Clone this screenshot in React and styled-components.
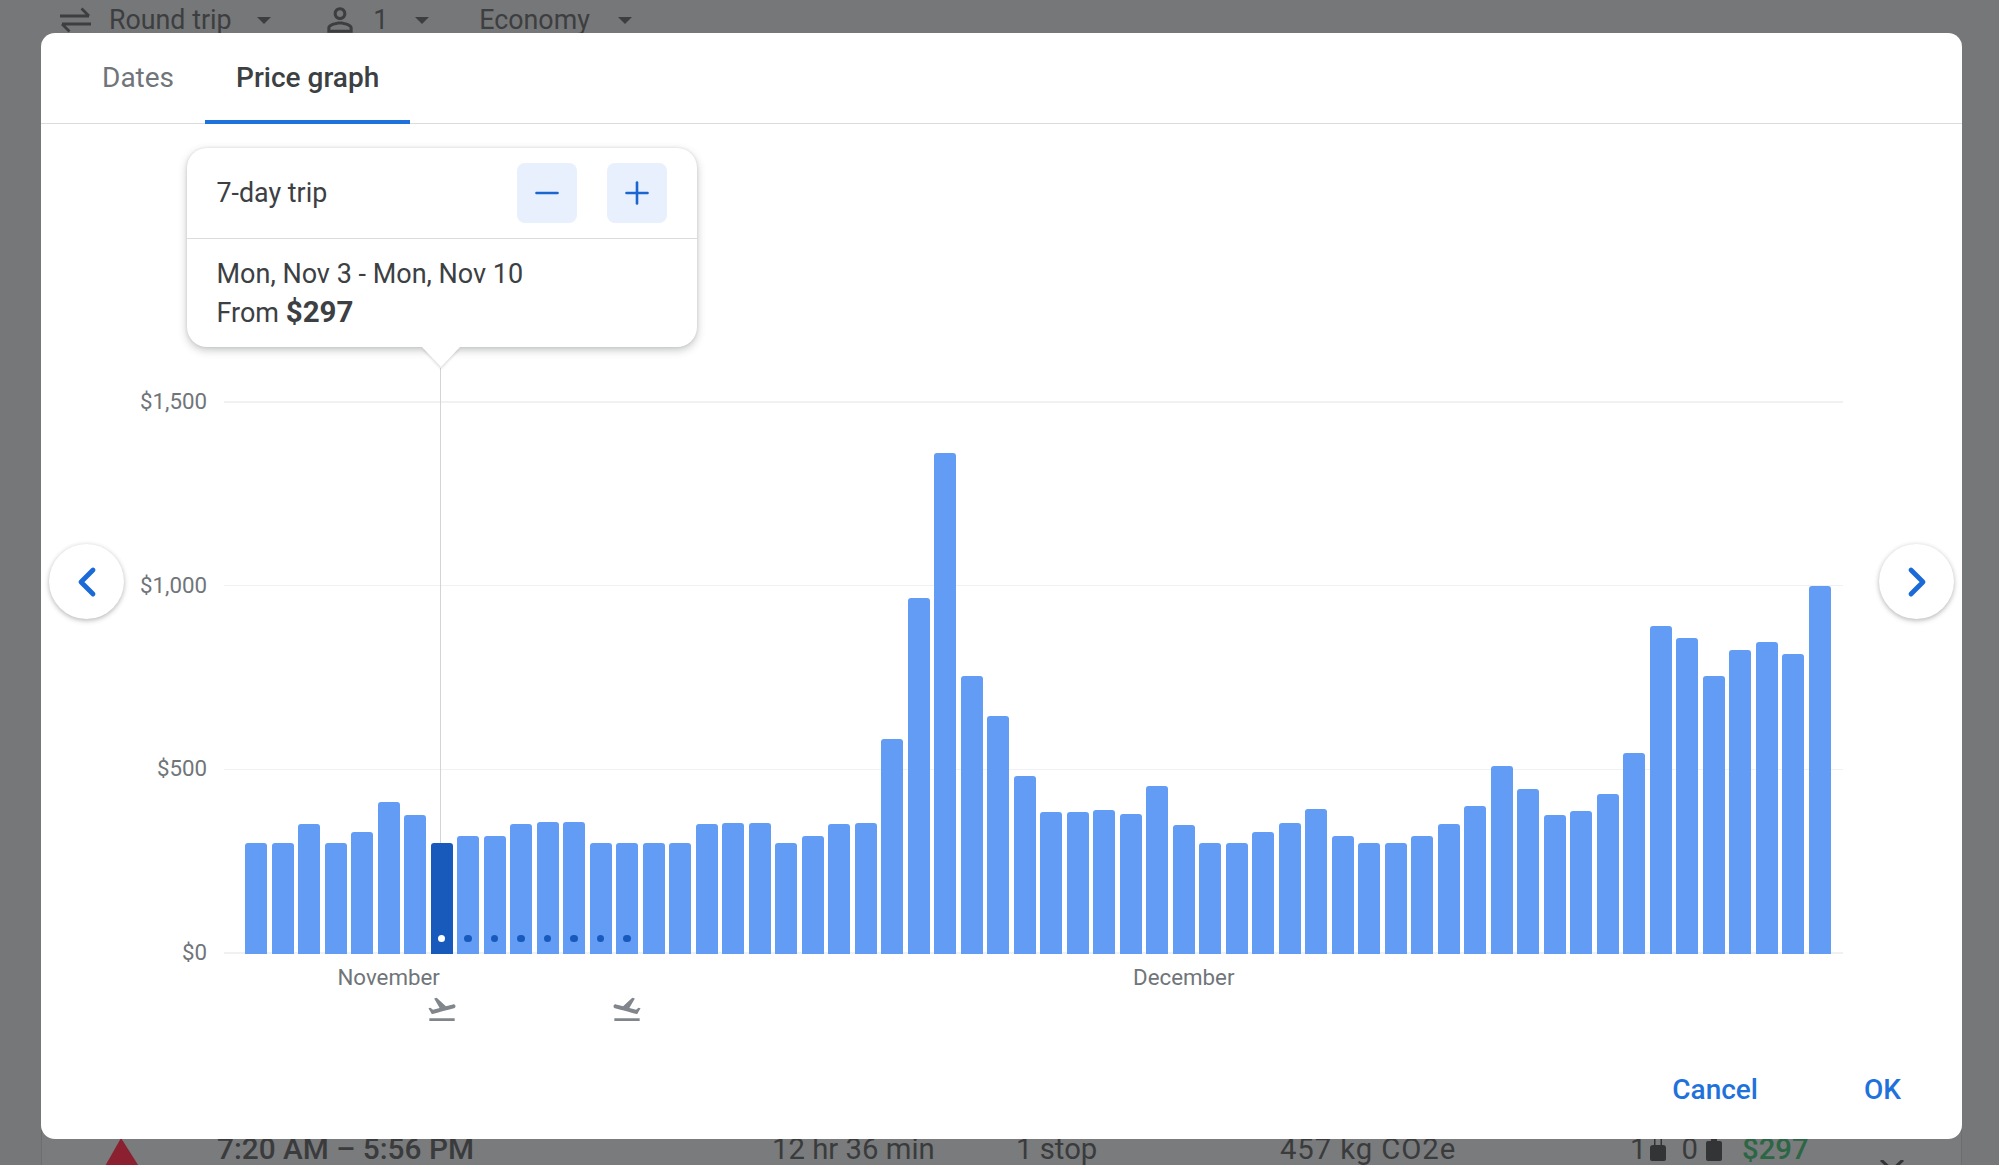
import React from 'react';
import styled, { createGlobalStyle } from 'styled-components';
import { ChevronLeft, ChevronRight, Minus, Plus } from 'lucide-react';

const GlobalStyle = createGlobalStyle`
  html, body {
    margin: 0;
    padding: 0;
    background: #767778;
  }

  * {
    box-sizing: border-box;
  }
`;

const Page = styled.div`
  position: relative;
  width: 1999px;
  height: 1165px;
  overflow: hidden;
  display: flex;
  flex-direction: column;
  justify-content: space-between;
  background: #767778;
  color: #3a3b3c;
  font-family: Roboto, 'Liberation Sans', sans-serif;
`;

const TopBar = styled.div`
  display: flex;
  align-items: center;
  height: 40px;
  padding-left: 60px;
  font-size: 26.8px;
`;

const SearchOption = styled.div`
  display: flex;
  align-items: center;
  gap: ${({ $gap }) => $gap}px;
  margin-right: ${({ $end }) => $end}px;
  color: #3d3e3f;
`;

const Caret = styled.span`
  width: 0;
  height: 0;
  margin-left: ${({ $left }) => $left}px;
  border-left: 7px solid transparent;
  border-right: 7px solid transparent;
  border-top: 7px solid #3d3e3f;
`;

const FlightRow = styled.div`
  display: grid;
  grid-template-columns: 175px 555px 244px 264px 350px 112px 138px auto;
  height: 37px;
  margin: 0 37px 0 41px;
  border-left: 1px solid #6d6e6f;
  border-right: 1px solid #6d6e6f;
  background: #7a7b7c;
  font-size: 29.3px;
  line-height: 42px;
  white-space: nowrap;
`;

const Carrier = styled.svg`
  margin: 10px 0 0 62px;
`;

const Time = styled.div`
  font-size: 29.8px;
  font-weight: 500;
`;

const Emissions = styled.div`
  letter-spacing: 0.9px;
`;

const Bags = styled.div`
  display: flex;
  align-items: flex-start;
`;

const BagIcon = styled.svg`
  margin: ${({ $top }) => $top}px ${({ $right }) => $right}px 0 ${({ $left }) => $left}px;
`;

const Price = styled.div`
  font-weight: 500;
  color: #2c6644;
`;

const RowChevron = styled.svg`
  margin-top: 32px;
`;

const Modal = styled.section`
  position: absolute;
  top: 33px;
  left: 41px;
  width: 1921px;
  height: 1106px;
  display: flex;
  flex-direction: column;
  background: #fff;
  border-radius: 14px;
`;

const Tabs = styled.nav`
  display: flex;
  height: 90.5px;
  padding-left: 30px;
  border-bottom: 1.5px solid #dadce0;
`;

const Tab = styled.div`
  display: flex;
  align-items: center;
  padding: 2px 31px 0;
  margin-bottom: -1.5px;
  font-size: 28px;
  font-weight: ${({ $active }) => ($active ? 500 : 400)};
  color: ${({ $active }) => ($active ? '#3c4043' : '#70757a')};
  border-bottom: 4px solid ${({ $active }) => ($active ? '#1f72dc' : 'transparent')};
`;

const Chart = styled.div`
  width: 1743px;
  margin-left: 59px;
  padding-top: 277.5px;
`;

const Plot = styled.div`
  display: grid;
  height: 553px;

  & > * {
    grid-area: 1 / 1;
  }
`;

const GridLines = styled.div`
  display: flex;
  flex-direction: column;
  justify-content: space-between;
`;

const GridRow = styled.div`
  display: flex;
  align-items: center;
  gap: 17px;
  height: 1.5px;
`;

const AxisLabel = styled.span`
  width: 107px;
  padding-bottom: 2px;
  text-align: right;
  font-size: 22.3px;
  color: #70757a;
`;

const GridLine = styled.div`
  flex: 1;
  height: 1.5px;
  background: #f0f1f2;
`;

const Bars = styled.div`
  display: grid;
  grid-template-columns: repeat(60, minmax(0, 1fr));
  column-gap: 4.2px;
  align-items: end;
  margin: 0 12px 0 145px;
`;

const Bar = styled.div`
  position: relative;
  display: flex;
  justify-content: center;
  background: ${({ $selected }) => ($selected ? '#185abc' : '#639cf4')};
  border-radius: 3px 3px 0 0;

  ${({ $selected }) =>
    $selected &&
    `
    &::before {
      content: '';
      position: absolute;
      bottom: 100%;
      left: 50%;
      width: 1.5px;
      height: 475px;
      margin-left: -2px;
      background: #d2d5d8;
    }
  `}
`;

const Dot = styled.span`
  position: absolute;
  bottom: 12px;
  width: 7.5px;
  height: 7.5px;
  border-radius: 50%;
  background: ${({ $selected }) => ($selected ? '#fff' : '#185abc')};
`;

const Months = styled.div`
  display: grid;
  grid-template-columns: repeat(60, minmax(0, 1fr));
  column-gap: 4.2px;
  margin: 10px 12px 0 145px;
  font-size: 22.3px;
  line-height: 26px;
  text-align: center;
  color: #70757a;
`;

const Month = styled.div`
  grid-column: span ${({ $span }) => $span};
`;

const TripMarks = styled.div`
  display: grid;
  grid-template-columns: repeat(60, minmax(0, 1fr));
  column-gap: 4.2px;
  margin: 3px 12px 0 145px;
`;

const TripMark = styled.svg`
  grid-column: ${({ $column }) => $column};
  justify-self: center;
  transform: ${({ $flip }) => ($flip ? 'scaleX(-1)' : 'none')};
  fill: #80868b;
`;

const Footer = styled.footer`
  display: flex;
  align-items: center;
  justify-content: flex-end;
  gap: 106px;
  height: 99px;
  margin-top: auto;
  padding-right: 61px;
`;

const TextButton = styled.button`
  padding: 0;
  border: 0;
  background: none;
  font: 500 28px Roboto, 'Liberation Sans', sans-serif;
  color: #1f72dc;
`;

const Popup = styled.div`
  position: absolute;
  top: 115px;
  left: 145.5px;
  width: 510px;
  height: 199px;
  background: #fff;
  border-radius: 20px;
  box-shadow: 0 3px 8px rgba(60, 64, 67, 0.3), 0 0 3px rgba(60, 64, 67, 0.12);

  &::after {
    content: '';
    position: absolute;
    top: 100%;
    left: 235px;
    border-left: 19px solid transparent;
    border-right: 19px solid transparent;
    border-top: 20px solid #fff;
    filter: drop-shadow(0 2px 1px rgba(60, 64, 67, 0.18));
  }
`;

const PopupHeader = styled.div`
  display: flex;
  align-items: center;
  height: 91px;
  padding: 0 30px;
  border-bottom: 1.5px solid #dadce0;
  font-size: 26.8px;
  color: #3c4043;
`;

const TripLength = styled.div`
  flex: 1;
`;

const StepButton = styled.button`
  display: flex;
  align-items: center;
  justify-content: center;
  width: 60px;
  height: 60px;
  margin-left: ${({ $left }) => $left}px;
  padding: 0;
  border: 0;
  border-radius: 8px;
  background: #e8f0fe;
  color: #1a66d0;
`;

const PopupBody = styled.div`
  padding: 16px 30px 0;
  font-size: 27px;
  line-height: 38px;
  color: #3c4043;

  & strong {
    font-weight: 700;
    font-size: 29.5px;
  }
`;

const PageButton = styled.button`
  position: absolute;
  top: 511px;
  ${({ $side }) => $side}: 8px;
  display: flex;
  align-items: center;
  justify-content: center;
  width: 75px;
  height: 75px;
  padding: 0;
  border: 0;
  border-radius: 50%;
  background: #fff;
  color: #1a6ad8;
  box-shadow: 0 2px 5px rgba(60, 64, 67, 0.3), 0 0 4px rgba(60, 64, 67, 0.1);
`;

// top edge of every bar, read off the page, $0 line sits at 953
const BAR_TOPS = [
  841.7, 841.7, 823.3, 841.7, 830.7, 800.7, 814, 841.7, 834.7, 834.7,
  823.3, 821.3, 821.3, 841.7, 841.7, 841.7, 841.7, 823.3, 822, 822,
  842, 835, 823, 821.7, 737.6, 596.5, 452, 675, 715, 775,
  810.7, 810.7, 809, 812.7, 784.5, 823.8, 842.4, 842.4, 831.4, 821.7,
  808.3, 834.7, 842, 842, 834.7, 823.3, 804.7, 765, 787.7, 814,
  810, 793.3, 752, 624.7, 637.3, 675.3, 649, 641.3, 652.7, 585,
];

const AXIS = ['$1,500', '$1,000', '$500', '$0'];
const SELECTED = 7;
const RETURN = 14;

const planePath =
  'M2.5 19h19v2h-19v-2zm19.57-9.36c-.21-.8-1.04-1.28-1.84-1.06L14.92 10l-6.9-6.43-1.93.51 4.14 7.17-4.97 1.33-1.97-1.54-1.45.39 2.59 4.49s7.12-1.9 16.57-4.43c.81-.23 1.28-1.05 1.07-1.85z';

const personPath =
  'M12 5.9c1.16 0 2.1.94 2.1 2.1s-.94 2.1-2.1 2.1S9.9 9.16 9.9 8s.94-2.1 2.1-2.1m0 9c2.97 0 6.1 1.46 6.1 2.1v1.1H5.9V17c0-.64 3.13-2.1 6.1-2.1M12 4C9.79 4 8 5.79 8 8s1.79 4 4 4 4-1.79 4-4-1.79-4-4-4zm0 9c-2.67 0-8 1.34-8 4v3h16v-3c0-2.66-5.33-4-8-4z';

const App = () => (
  <Page>
    <GlobalStyle />
    <TopBar>
      <SearchOption $gap={18} $end={50}>
        <svg width="31" height="28" viewBox="0 0 31 28" fill="none" stroke="#3d3e3f" strokeWidth="2.8">
          <path d="M0 10h29M21.5 2.5 29 10" />
          <path d="M31 18H2M9.5 25.5 2 18" />
        </svg>
        Round trip
        <Caret $left={7} />
      </SearchOption>
      <SearchOption $gap={8} $end={50}>
        <svg width="38" height="38" viewBox="0 0 24 24" fill="#3d3e3f">
          <path d={personPath} />
        </svg>
        <span>&nbsp;1</span>
        <Caret $left={19} />
      </SearchOption>
      <SearchOption $gap={0} $end={0}>
        Economy
        <Caret $left={28} />
      </SearchOption>
    </TopBar>

    <FlightRow>
      <Carrier width="40" height="30" viewBox="0 0 40 30">
        <path d="M17 0 36 30H0z" fill="#8a2030" />
      </Carrier>
      <Time>7:20 AM – 5:56 PM</Time>
      <div>12 hr 36 min</div>
      <div>1 stop</div>
      <Emissions>457 kg CO2e</Emissions>
      <Bags>
        1
        <BagIcon $top={10} $left={4} $right={15} width="16" height="24" viewBox="0 0 16 24" fill="#333435">
          <path d="M4 0h1.500v7H10.500V0H12v7h1a3 3 0 0 1 3 3v11a2 2 0 0 1-2 2H2a2 2 0 0 1-2-2V10a3 3 0 0 1 3-3h1z" />
        </BagIcon>
        0
        <BagIcon $top={10} $left={8} $right={0} width="16" height="24" viewBox="0 0 16 24" fill="#333435">
          <path d="M5 0h6v3h3a2 2 0 0 1 2 2v16a2 2 0 0 1-2 2H2a2 2 0 0 1-2-2V5a2 2 0 0 1 2-2h3z" />
        </BagIcon>
      </Bags>
      <Price>$297</Price>
      <RowChevron width="24" height="8" viewBox="0 0 24 8" fill="none" stroke="#333435" strokeWidth="3">
        <path d="M1 0l11 10L23 0" />
      </RowChevron>
    </FlightRow>

    <Modal>
      <Tabs>
        <Tab>Dates</Tab>
        <Tab $active>Price graph</Tab>
      </Tabs>

      <Chart>
        <Plot>
          <GridLines>
            {AXIS.map((label) => (
              <GridRow key={label}>
                <AxisLabel>{label}</AxisLabel>
                <GridLine />
              </GridRow>
            ))}
          </GridLines>
          <Bars>
            {BAR_TOPS.map((top, index) => (
              <Bar key={index} $selected={index === SELECTED} style={{ height: 953 - top }}>
                {index >= SELECTED && index <= RETURN && <Dot $selected={index === SELECTED} />}
              </Bar>
            ))}
          </Bars>
        </Plot>
        <Months>
          <Month $span={11}>November</Month>
          <Month $span={49}>December</Month>
        </Months>
        <TripMarks>
          <TripMark $column={SELECTED + 1} width="32" height="32" viewBox="0 0 24 24">
            <path d={planePath} />
          </TripMark>
          <TripMark $column={RETURN + 1} $flip width="32" height="32" viewBox="0 0 24 24">
            <path d={planePath} />
          </TripMark>
        </TripMarks>
      </Chart>

      <Footer>
        <TextButton>Cancel</TextButton>
        <TextButton>OK</TextButton>
      </Footer>

      <Popup>
        <PopupHeader>
          <TripLength>7-day trip</TripLength>
          <StepButton>
            <Minus size={36} strokeWidth={1.75} />
          </StepButton>
          <StepButton $left={30}>
            <Plus size={36} strokeWidth={1.75} />
          </StepButton>
        </PopupHeader>
        <PopupBody>
          <div>Mon, Nov 3 - Mon, Nov 10</div>
          <div>
            From <strong>$297</strong>
          </div>
        </PopupBody>
      </Popup>

      <PageButton $side="left">
        <ChevronLeft size={48} strokeWidth={2.4} />
      </PageButton>
      <PageButton $side="right">
        <ChevronRight size={48} strokeWidth={2.4} />
      </PageButton>
    </Modal>
  </Page>
);

export default App;
